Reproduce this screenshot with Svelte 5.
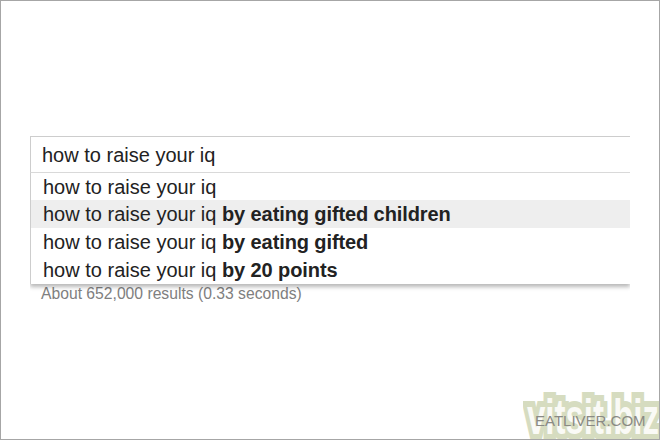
<script lang="ts">
	const query = 'how to raise your iq';
	const suggestions = [
		{ rest: '', active: false },
		{ rest: 'by eating gifted children', active: true },
		{ rest: 'by eating gifted', active: false },
		{ rest: 'by 20 points', active: false }
	];
</script>

<div class="frame">
	<div class="search">
		<div class="input">{query}</div>
		<ul class="list">
			{#each suggestions as s}
				<li class:active={s.active}>{query}{#if s.rest}&nbsp;<b>{s.rest}</b>{/if}</li>
			{/each}
		</ul>
		<div class="stats">About 652,000 results (0.33 seconds)</div>
	</div>
	<div class="mark">vitsit.biz</div>
	<div class="credit">EATLIVER.COM</div>
</div>

<style>
	:global(body) {
		margin: 0;
		background: #fff;
	}
	.frame {
		position: relative;
		box-sizing: border-box;
		width: 660px;
		height: 440px;
		overflow: hidden;
		border: 1px solid #a6a6a6;
		padding: 135px 29px 0 29px;
		font-family: 'Liberation Sans', Arial, sans-serif;
		color: #222;
	}
	.search {
		width: 600px;
	}
	.input {
		box-sizing: border-box;
		height: 37px;
		border: 1px solid #cdcdcd;
		border-right: 0;
		border-bottom: 1px solid #d9d9d9;
		padding-left: 11px;
		font-size: 20px;
		line-height: 37px;
	}
	.list {
		list-style: none;
		margin: 0;
		padding: 0;
		border-left: 1px solid #cdcdcd;
		box-shadow: 0 3px 4px rgba(0, 0, 0, 0.28);
		clip-path: inset(0 0 -10px 0);
		position: relative;
	}
	li {
		height: 28px;
		line-height: 28px;
		padding-left: 12px;
		font-size: 20px;
		white-space: nowrap;
	}
	li:first-child {
		height: 27px;
	}
	li.active {
		background: #eeeeee;
	}
	b {
		font-weight: 700;
		letter-spacing: -0.1px;
	}
	.stats {
		padding-left: 11px;
		margin-top: 1px;
		font-size: 15.7px;
		line-height: 18px;
		color: #808080;
	}
	.mark {
		position: absolute;
		left: 526px;
		top: 386px;
		font-weight: 700;
		font-size: 50px;
		line-height: 60px;
		color: #fafaf6;
		-webkit-text-stroke: 12px #d6dcc0;
		paint-order: stroke fill;
		white-space: nowrap;
		transform: scaleX(0.66);
		transform-origin: left center;
	}
	.credit {
		position: absolute;
		left: 534px;
		top: 411px;
		font-size: 15px;
		line-height: 18px;
		color: #8a8a84;
		white-space: nowrap;
	}
</style>
